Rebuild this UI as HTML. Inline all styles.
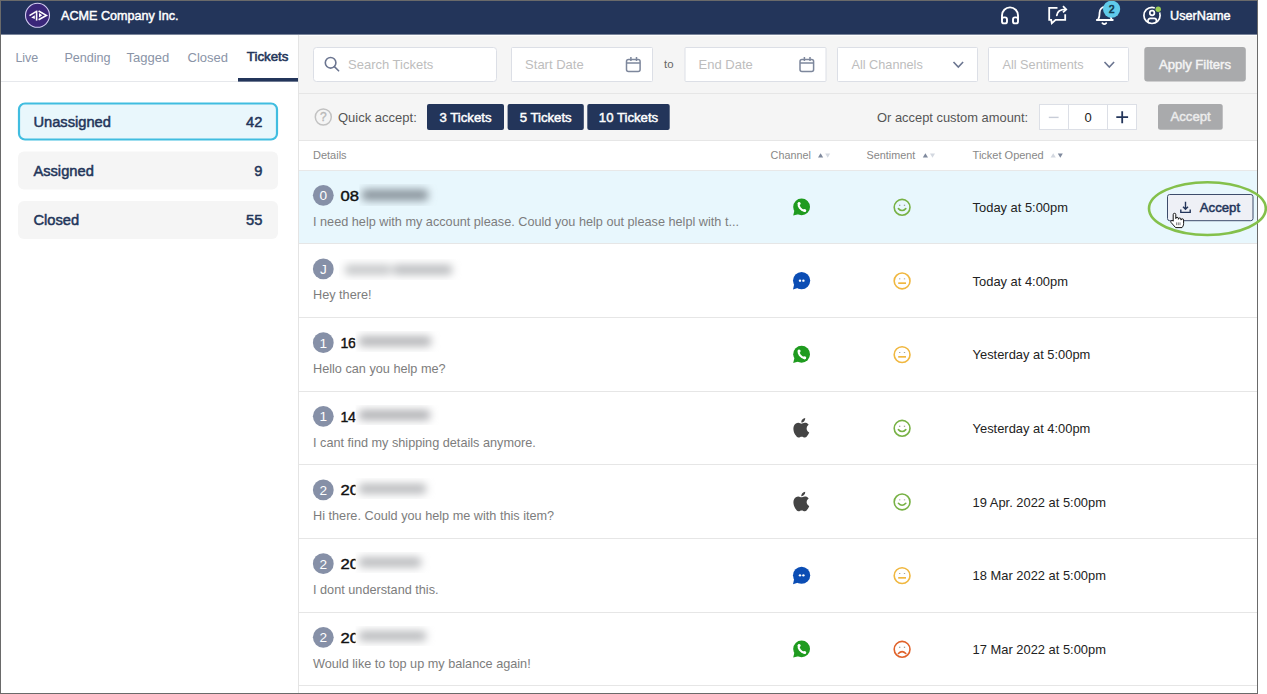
<!DOCTYPE html>
<html><head><meta charset="utf-8"><style>
html,body{margin:0;padding:0;background:#fff;width:1267px;height:694px;overflow:hidden}
svg{display:block;font-family:"Liberation Sans",sans-serif}
</style></head><body>
<svg width="1267" height="694" viewBox="0 0 1267 694">
<defs><filter id="bl" x="-50%" y="-50%" width="200%" height="200%"><feGaussianBlur stdDeviation="4.2"/></filter><clipPath id="cp0"><rect x="359.3" y="181.00" width="81.69999999999999" height="26"/></clipPath><clipPath id="cp1"><rect x="339" y="254.67" width="124" height="26"/></clipPath><clipPath id="cp2"><rect x="355.6" y="328.33" width="85.39999999999998" height="26"/></clipPath><clipPath id="cp3"><rect x="355.6" y="402.00" width="83.39999999999998" height="26"/></clipPath><clipPath id="cp4"><rect x="355.6" y="475.67" width="80.39999999999998" height="26"/></clipPath><clipPath id="cp5"><rect x="355.6" y="549.34" width="75.39999999999998" height="26"/></clipPath><clipPath id="cp6"><rect x="355.6" y="623.00" width="80.39999999999998" height="26"/></clipPath></defs>
<rect x="0" y="0" width="1267" height="694" fill="#fff"/>
<rect x="1" y="1" width="1256" height="33.6" fill="#23355a"/>
<rect x="299" y="36" width="958" height="57" fill="#f5f5f5"/>
<rect x="299" y="93" width="958" height="1" fill="#e6e6e6"/>
<rect x="299" y="94" width="958" height="46" fill="#f5f5f5"/>
<rect x="299" y="140" width="958" height="1" fill="#e6e6e6"/>
<rect x="299" y="170" width="958" height="1" fill="#e8e8e8"/>
<rect x="299" y="171" width="958" height="72" fill="#e8f7fd"/>
<rect x="299" y="243" width="958" height="1" fill="#e6e6e6"/>
<rect x="299" y="317" width="958" height="1" fill="#e6e6e6"/>
<rect x="299" y="391" width="958" height="1" fill="#e6e6e6"/>
<rect x="299" y="464" width="958" height="1" fill="#e6e6e6"/>
<rect x="299" y="538" width="958" height="1" fill="#e6e6e6"/>
<rect x="299" y="612" width="958" height="1" fill="#e6e6e6"/>
<rect x="299" y="685" width="958" height="1" fill="#e6e6e6"/>
<rect x="298" y="35" width="1" height="658" fill="#e4e4e4"/>
<rect x="1" y="81" width="297" height="1" fill="#e6e8ec"/>
<rect x="238" y="78" width="60" height="3.6" fill="#23355a"/>
<circle cx="37.5" cy="15.3" r="12" fill="#3a2679" stroke="#d4ccf2" stroke-width="1.1"/>
<g stroke="#fff" stroke-width="1.6" fill="none" stroke-linejoin="miter"><path d="M29.5 15.6 L36 11.6"/><path d="M36.6 10.6 V20.6"/><path d="M38.6 11 L46.4 15.4 L38.6 19.8"/></g>
<path d="M31.2 17.4 L34.8 15.2 L34.8 19 Z" fill="#fff"/><path d="M39 13 L42.2 15.3 L39 17.6 Z" fill="#fff"/>
<text x="61" y="20.1" font-size="12.6" font-weight="400" fill="#fff" stroke="#fff" stroke-width="0.45" text-anchor="start" >ACME Company Inc.</text>
<g stroke="#fff" stroke-width="1.9" fill="none" stroke-linecap="round"><path d="M1002 19 V15.4 A8 8 0 0 1 1018 15.4 V19"/><rect x="1002" y="17.4" width="5" height="6" rx="2"/><rect x="1013" y="17.4" width="5" height="6" rx="2"/></g>
<g stroke="#fff" stroke-width="1.8" fill="none" stroke-linejoin="miter"><path d="M1057.5 7.8 H1049.2 V19.8 H1051.2 L1051.8 23.2 L1055.6 19.8 H1065.2 V14.2"/><path d="M1056.8 15.4 C1057.2 11.6 1060 9.4 1065.6 9.4" stroke-linecap="round"/><path d="M1063 6.2 L1066.2 9.4 L1063 12.4"/></g>
<g stroke="#fff" stroke-width="1.8" fill="none" stroke-linecap="round"><path d="M1096.8 20 H1112.8"/><path d="M1098.2 19.6 C1099.6 17.5 1099.6 15.5 1099.6 12.6 A5.3 5.8 0 0 1 1110.2 12.6 C1110.2 15.5 1110.2 17.5 1111.6 19.6"/><path d="M1102.4 23.2 Q1104.3 25 1106.2 23.2"/></g>
<circle cx="1111.6" cy="9.1" r="8.6" fill="#60cbea"/>
<text x="1111.6" y="12.9" font-size="10.5" font-weight="400" fill="#123a4e" stroke="#123a4e" stroke-width="0.6" text-anchor="middle" >2</text>
<g stroke="#fff" stroke-width="1.7" fill="none"><circle cx="1152" cy="15.4" r="8.1"/><circle cx="1152.1" cy="13" r="2.3"/><path d="M1148 22.6 V20.6 A2.2 2.2 0 0 1 1150.2 18.4 H1154.2 A2.2 2.2 0 0 1 1156.4 20.6 V22.6"/></g>
<circle cx="1158.2" cy="9.2" r="3.6" fill="#23355a"/><circle cx="1158.2" cy="9.2" r="2.7" fill="#9acd55"/>
<text x="1170" y="20" font-size="12.7" font-weight="400" fill="#fff" stroke="#fff" stroke-width="0.45" text-anchor="start" >UserName</text>
<text x="15.4" y="62" font-size="12.5" font-weight="400" fill="#8a94a7" text-anchor="start" >Live</text>
<text x="64.4" y="62" font-size="12.6" font-weight="400" fill="#8a94a7" text-anchor="start" >Pending</text>
<text x="126.6" y="62" font-size="13" font-weight="400" fill="#8a94a7" text-anchor="start" >Tagged</text>
<text x="187.6" y="62" font-size="13" font-weight="400" fill="#8a94a7" text-anchor="start" >Closed</text>
<text x="246.8" y="61.2" font-size="13.3" font-weight="400" fill="#23355a" stroke="#23355a" stroke-width="0.55" text-anchor="start" >Tickets</text>
<rect x="19" y="103.5" width="258" height="36" rx="6" fill="#e9f7fc" stroke="#40bde0" stroke-width="2.2"/>
<rect x="18" y="151.5" width="260" height="38" rx="6" fill="#f5f5f5"/>
<rect x="18" y="201" width="260" height="38" rx="6" fill="#f5f5f5"/>
<text x="33.4" y="127" font-size="14.7" font-weight="400" fill="#23355a" stroke="#23355a" stroke-width="0.5" text-anchor="start" >Unassigned</text>
<text x="262.4" y="127" font-size="14.7" font-weight="400" fill="#23355a" stroke="#23355a" stroke-width="0.5" text-anchor="end" >42</text>
<text x="33.4" y="176" font-size="14.7" font-weight="400" fill="#23355a" stroke="#23355a" stroke-width="0.5" text-anchor="start" >Assigned</text>
<text x="262.4" y="176" font-size="14.7" font-weight="400" fill="#23355a" stroke="#23355a" stroke-width="0.5" text-anchor="end" >9</text>
<text x="33.4" y="225.4" font-size="14.7" font-weight="400" fill="#23355a" stroke="#23355a" stroke-width="0.5" text-anchor="start" >Closed</text>
<text x="262.4" y="225.4" font-size="14.7" font-weight="400" fill="#23355a" stroke="#23355a" stroke-width="0.5" text-anchor="end" >55</text>
<rect x="313.5" y="47.5" width="183" height="34" rx="3" fill="#fff" stroke="#dcdfe6"/>
<g stroke="#6b7590" stroke-width="1.6" fill="none"><circle cx="330.6" cy="62.8" r="5.3"/><path d="M334.4 66.6 L338.6 70.8" stroke-linecap="round"/></g>
<text x="348" y="69" font-size="13" font-weight="400" fill="#bdbdbd" text-anchor="start" >Search Tickets</text>
<rect x="511.5" y="47.5" width="141" height="34" rx="1" fill="#fff" stroke="#dcdfe6"/>
<text x="525.1" y="69" font-size="13" font-weight="400" fill="#bdbdbd" text-anchor="start" >Start Date</text>
<g stroke="#7d879c" stroke-width="1.5" fill="none"><rect x="626.5" y="59.4" width="13.6" height="12" rx="2"/><path d="M626.5 63 H640.1"/><path d="M630.9 57 V61 M636.5 57 V61"/></g>
<rect x="685" y="47.5" width="141" height="34" rx="1" fill="#fff" stroke="#dcdfe6"/>
<text x="698.6" y="69" font-size="13" font-weight="400" fill="#bdbdbd" text-anchor="start" >End Date</text>
<g stroke="#7d879c" stroke-width="1.5" fill="none"><rect x="800" y="59.4" width="13.6" height="12" rx="2"/><path d="M800 63 H813.6"/><path d="M804.4 57 V61 M810 57 V61"/></g>
<text x="664" y="68.4" font-size="11.4" font-weight="400" fill="#666" text-anchor="start" >to</text>
<rect x="837.5" y="47.5" width="140" height="34" rx="1" fill="#fff" stroke="#dcdfe6"/>
<text x="851.5" y="68.8" font-size="12.7" font-weight="400" fill="#bdbdbd" text-anchor="start" >All Channels</text>
<path d="M953.5 62 L958.3 67 L963.1 62" stroke="#6b7590" stroke-width="1.6" fill="none"/>
<rect x="988.5" y="47.5" width="140" height="34" rx="1" fill="#fff" stroke="#dcdfe6"/>
<text x="1002.5" y="68.8" font-size="12.7" font-weight="400" fill="#bdbdbd" text-anchor="start" >All Sentiments</text>
<path d="M1104.5 62 L1109.3 67 L1114.1 62" stroke="#6b7590" stroke-width="1.6" fill="none"/>
<rect x="1144.3" y="47" width="101.5" height="34.6" rx="3" fill="#a9aaac"/>
<text x="1195" y="68.7" font-size="13.1" font-weight="400" fill="#f4f4f4" stroke="#f4f4f4" stroke-width="0.45" text-anchor="middle" >Apply Filters</text>
<circle cx="323.3" cy="117" r="8" fill="none" stroke="#c2c2c2" stroke-width="1.5"/>
<text x="323.4" y="121.3" font-size="12" font-weight="400" fill="#b9b9b9" stroke="#b9b9b9" stroke-width="0.35" text-anchor="middle" >?</text>
<text x="338" y="121.7" font-size="13" font-weight="400" fill="#555" text-anchor="start" >Quick accept:</text>
<rect x="427" y="104" width="77" height="26" rx="2" fill="#23355a"/>
<text x="465.5" y="121.7" font-size="13.2" font-weight="400" fill="#fff" stroke="#fff" stroke-width="0.45" text-anchor="middle" >3 Tickets</text>
<rect x="507.6" y="104" width="76.2" height="26" rx="2" fill="#23355a"/>
<text x="545.7" y="121.7" font-size="13.2" font-weight="400" fill="#fff" stroke="#fff" stroke-width="0.45" text-anchor="middle" >5 Tickets</text>
<rect x="587.3" y="104" width="82.4" height="26" rx="2" fill="#23355a"/>
<text x="628.5" y="121.7" font-size="13.2" font-weight="400" fill="#fff" stroke="#fff" stroke-width="0.45" text-anchor="middle" >10 Tickets</text>
<text x="877" y="121.7" font-size="12.9" font-weight="400" fill="#555" text-anchor="start" >Or accept custom amount:</text>
<rect x="1039.5" y="104.5" width="97" height="25" fill="#fff" stroke="#dcdfe6"/>
<rect x="1068" y="104.5" width="1" height="25" fill="#dcdfe6"/><rect x="1107" y="104.5" width="1" height="25" fill="#dcdfe6"/>
<path d="M1048.8 117.4 H1058.6" stroke="#c8cdd8" stroke-width="1.4"/>
<text x="1088" y="121.5" font-size="13" font-weight="400" fill="#222" text-anchor="middle" >0</text>
<path d="M1116.3 117.2 H1128.1 M1122.2 111.2 V123.2" stroke="#23355a" stroke-width="1.8"/>
<rect x="1158" y="104" width="64.7" height="25.8" rx="2.5" fill="#a9aaac"/>
<text x="1190.6" y="121.4" font-size="13.2" font-weight="400" fill="#ececec" stroke="#ececec" stroke-width="0.45" text-anchor="middle" >Accept</text>
<text x="313" y="159" font-size="11" font-weight="400" fill="#888" text-anchor="start" >Details</text>
<text x="770.6" y="159" font-size="10.8" font-weight="400" fill="#888" text-anchor="start" >Channel</text>
<text x="866.6" y="159" font-size="10.8" font-weight="400" fill="#888" text-anchor="start" >Sentiment</text>
<text x="972.6" y="159" font-size="11" font-weight="400" fill="#888" text-anchor="start" >Ticket Opened</text>
<path d="M818 157.6 L820.6 153.2 L823.2 157.6 Z" fill="#7f899d"/><path d="M825.2 153.4 L830.2 153.4 L827.7 157.8 Z" fill="#d3d8e0"/>
<path d="M922.8 157.6 L925.4 153.2 L928.0 157.6 Z" fill="#7f899d"/><path d="M930.0 153.4 L935.0 153.4 L932.5 157.8 Z" fill="#d3d8e0"/>
<path d="M1050.6 157.6 L1053.1999999999998 153.2 L1055.8 157.6 Z" fill="#d3d8e0"/><path d="M1057.8 153.4 L1062.8 153.4 L1060.3 157.8 Z" fill="#7f899d"/>
<circle cx="323.3" cy="195.30" r="10.4" fill="#8690a7"/>
<text x="323.3" y="200.20" font-size="13.6" font-weight="400" fill="#fff" text-anchor="middle" >0</text>
<g transform="translate(340.6 200.50) scale(1.17 1)"><text x="0" y="0" font-size="14.2" font-weight="400" fill="#111" stroke="#111" stroke-width="0.4" text-anchor="start" >08</text></g>
<rect x="359.3" y="181.00" width="79.69999999999999" height="26" fill="#e8f7fd"/>
<g clip-path="url(#cp0)"><g filter="url(#bl)"><rect x="362" y="189.50" width="66" height="11" rx="3" fill="#87929a"/></g></g>
<text x="313" y="225.70" font-size="12.7" font-weight="400" fill="#7d7d7d" text-anchor="start" >I need help with my account please. Could you help out please helpl with t...</text>
<g transform="translate(792.80 198.40)"><circle cx="8.8" cy="8.5" r="8.4" fill="#1f9b1f"/><path d="M1.6 12.2 L0.4 17.2 L5.6 15.8 Z" fill="#1f9b1f"/><path d="M6 5.2 C5.2 7.8 7.6 11.6 11.8 12.4" stroke="#fff" stroke-width="2.1" fill="none" stroke-linecap="round"/><circle cx="6.3" cy="5.2" r="1.5" fill="#fff"/><circle cx="11.9" cy="12" r="1.5" fill="#fff"/></g>
<circle cx="902.1" cy="207.30" r="7.9" fill="none" stroke="#77b144" stroke-width="1.6"/>
<path d="M899.7 204.80 v0.9 M904.5 204.80 v0.9" stroke="#7d7d70" stroke-width="1.3" opacity="0.9"/>
<path d="M898.4 208.60 Q902.1 212.50 905.8000000000001 208.60" stroke="#77b144" stroke-width="1.6" fill="none" stroke-linecap="round"/>
<text x="972.6" y="211.90" font-size="12.9" font-weight="400" fill="#222" text-anchor="start" >Today at 5:00pm</text>
<circle cx="323.3" cy="268.97" r="10.4" fill="#8690a7"/>
<text x="323.3" y="273.87" font-size="13.6" font-weight="400" fill="#fff" text-anchor="middle" >J</text>
<rect x="339" y="254.67" width="122" height="26" fill="#fff"/>
<g clip-path="url(#cp1)"><g filter="url(#bl)"><rect x="345" y="264.67" width="46" height="10" rx="3" fill="#c4c6c8"/><rect x="393" y="264.67" width="59" height="10" rx="3" fill="#b9bbbe"/></g></g>
<text x="313" y="299.37" font-size="12.7" font-weight="400" fill="#7d7d7d" text-anchor="start" >Hey there!</text>
<g transform="translate(792.80 272.07)"><circle cx="8.8" cy="8.5" r="8.6" fill="#0b4db4"/><path d="M1.4 12 L0.2 17.4 L5.6 15.8 Z" fill="#0b4db4"/><circle cx="7.2" cy="8.6" r="1.2" fill="#fff"/><circle cx="10.6" cy="8.6" r="1.2" fill="#fff"/></g>
<circle cx="902.1" cy="280.97" r="7.9" fill="none" stroke="#f0b73f" stroke-width="1.6"/>
<path d="M899.7 278.47 v0.9 M904.5 278.47 v0.9" stroke="#7d7d70" stroke-width="1.3" opacity="0.9"/>
<path d="M898.2 283.17 H906.0" stroke="#f0b73f" stroke-width="1.7" fill="none"/>
<text x="972.6" y="285.57" font-size="12.9" font-weight="400" fill="#222" text-anchor="start" >Today at 4:00pm</text>
<circle cx="323.3" cy="342.63" r="10.4" fill="#8690a7"/>
<text x="323.3" y="347.53" font-size="13.6" font-weight="400" fill="#fff" text-anchor="middle" >1</text>
<g transform="translate(340.6 347.83) scale(1.0 1)"><text x="0" y="0" font-size="14.2" font-weight="400" fill="#111" stroke="#111" stroke-width="0.4" text-anchor="start" letter-spacing="-0.4">16</text></g>
<rect x="355.6" y="328.33" width="83.39999999999998" height="26" fill="#fff"/>
<g clip-path="url(#cp2)"><g filter="url(#bl)"><rect x="359" y="336.33" width="72" height="10" rx="3" fill="#b2b3b6"/></g></g>
<text x="313" y="373.03" font-size="12.7" font-weight="400" fill="#7d7d7d" text-anchor="start" >Hello can you help me?</text>
<g transform="translate(792.80 345.73)"><circle cx="8.8" cy="8.5" r="8.4" fill="#1f9b1f"/><path d="M1.6 12.2 L0.4 17.2 L5.6 15.8 Z" fill="#1f9b1f"/><path d="M6 5.2 C5.2 7.8 7.6 11.6 11.8 12.4" stroke="#fff" stroke-width="2.1" fill="none" stroke-linecap="round"/><circle cx="6.3" cy="5.2" r="1.5" fill="#fff"/><circle cx="11.9" cy="12" r="1.5" fill="#fff"/></g>
<circle cx="902.1" cy="354.63" r="7.9" fill="none" stroke="#f0b73f" stroke-width="1.6"/>
<path d="M899.7 352.13 v0.9 M904.5 352.13 v0.9" stroke="#7d7d70" stroke-width="1.3" opacity="0.9"/>
<path d="M898.2 356.83 H906.0" stroke="#f0b73f" stroke-width="1.7" fill="none"/>
<text x="972.6" y="359.23" font-size="12.9" font-weight="400" fill="#222" text-anchor="start" >Yesterday at 5:00pm</text>
<circle cx="323.3" cy="416.30" r="10.4" fill="#8690a7"/>
<text x="323.3" y="421.20" font-size="13.6" font-weight="400" fill="#fff" text-anchor="middle" >1</text>
<g transform="translate(340.6 421.50) scale(1.0 1)"><text x="0" y="0" font-size="14.2" font-weight="400" fill="#111" stroke="#111" stroke-width="0.4" text-anchor="start" letter-spacing="-0.4">14</text></g>
<rect x="355.6" y="402.00" width="81.39999999999998" height="26" fill="#fff"/>
<g clip-path="url(#cp3)"><g filter="url(#bl)"><rect x="359" y="410.00" width="71" height="10" rx="3" fill="#aeafb2"/></g></g>
<text x="313" y="446.70" font-size="12.7" font-weight="400" fill="#7d7d7d" text-anchor="start" >I cant find my shipping details anymore.</text>
<g transform="translate(791.6 418.10) scale(0.81)"><path d="M12.152 6.896c-.948 0-2.415-1.078-3.96-1.04-2.04.027-3.91 1.183-4.961 3.014-2.117 3.675-.546 9.103 1.519 12.09 1.013 1.454 2.208 3.09 3.792 3.039 1.52-.065 2.09-.987 3.935-.987 1.831 0 2.35.987 3.96.948 1.637-.026 2.676-1.48 3.676-2.948 1.156-1.688 1.636-3.325 1.662-3.415-.039-.013-3.182-1.221-3.22-4.857-.026-3.04 2.48-4.494 2.597-4.559-1.429-2.09-3.623-2.324-4.39-2.376-2-.156-3.675 1.09-4.61 1.09zM15.53 3.83c.843-1.012 1.4-2.427 1.245-3.83-1.207.052-2.662.805-3.532 1.818-.78.896-1.454 2.338-1.273 3.714 1.338.104 2.715-.688 3.559-1.701" fill="#444"/></g>
<circle cx="902.1" cy="428.30" r="7.9" fill="none" stroke="#77b144" stroke-width="1.6"/>
<path d="M899.7 425.80 v0.9 M904.5 425.80 v0.9" stroke="#7d7d70" stroke-width="1.3" opacity="0.9"/>
<path d="M898.4 429.60 Q902.1 433.50 905.8000000000001 429.60" stroke="#77b144" stroke-width="1.6" fill="none" stroke-linecap="round"/>
<text x="972.6" y="432.90" font-size="12.9" font-weight="400" fill="#222" text-anchor="start" >Yesterday at 4:00pm</text>
<circle cx="323.3" cy="489.97" r="10.4" fill="#8690a7"/>
<text x="323.3" y="494.87" font-size="13.6" font-weight="400" fill="#fff" text-anchor="middle" >2</text>
<g transform="translate(340.6 495.17) scale(1.17 1)"><text x="0" y="0" font-size="14.2" font-weight="400" fill="#111" stroke="#111" stroke-width="0.4" text-anchor="start" >20</text></g>
<rect x="355.6" y="475.67" width="78.39999999999998" height="26" fill="#fff"/>
<g clip-path="url(#cp4)"><g filter="url(#bl)"><rect x="359" y="483.67" width="67" height="10" rx="3" fill="#b8b9bc"/></g></g>
<text x="313" y="520.37" font-size="12.7" font-weight="400" fill="#7d7d7d" text-anchor="start" >Hi there. Could you help me with this item?</text>
<g transform="translate(791.6 491.77) scale(0.81)"><path d="M12.152 6.896c-.948 0-2.415-1.078-3.96-1.04-2.04.027-3.91 1.183-4.961 3.014-2.117 3.675-.546 9.103 1.519 12.09 1.013 1.454 2.208 3.09 3.792 3.039 1.52-.065 2.09-.987 3.935-.987 1.831 0 2.35.987 3.96.948 1.637-.026 2.676-1.48 3.676-2.948 1.156-1.688 1.636-3.325 1.662-3.415-.039-.013-3.182-1.221-3.22-4.857-.026-3.04 2.48-4.494 2.597-4.559-1.429-2.09-3.623-2.324-4.39-2.376-2-.156-3.675 1.09-4.61 1.09zM15.53 3.83c.843-1.012 1.4-2.427 1.245-3.83-1.207.052-2.662.805-3.532 1.818-.78.896-1.454 2.338-1.273 3.714 1.338.104 2.715-.688 3.559-1.701" fill="#444"/></g>
<circle cx="902.1" cy="501.97" r="7.9" fill="none" stroke="#77b144" stroke-width="1.6"/>
<path d="M899.7 499.47 v0.9 M904.5 499.47 v0.9" stroke="#7d7d70" stroke-width="1.3" opacity="0.9"/>
<path d="M898.4 503.27 Q902.1 507.17 905.8000000000001 503.27" stroke="#77b144" stroke-width="1.6" fill="none" stroke-linecap="round"/>
<text x="972.6" y="506.57" font-size="12.9" font-weight="400" fill="#222" text-anchor="start" >19 Apr. 2022 at 5:00pm</text>
<circle cx="323.3" cy="563.63" r="10.4" fill="#8690a7"/>
<text x="323.3" y="568.53" font-size="13.6" font-weight="400" fill="#fff" text-anchor="middle" >2</text>
<g transform="translate(340.6 568.84) scale(1.17 1)"><text x="0" y="0" font-size="14.2" font-weight="400" fill="#111" stroke="#111" stroke-width="0.4" text-anchor="start" >20</text></g>
<rect x="355.6" y="549.34" width="73.39999999999998" height="26" fill="#fff"/>
<g clip-path="url(#cp5)"><g filter="url(#bl)"><rect x="359" y="557.34" width="62" height="10" rx="3" fill="#b8b9bc"/></g></g>
<text x="313" y="594.04" font-size="12.7" font-weight="400" fill="#7d7d7d" text-anchor="start" >I dont understand this.</text>
<g transform="translate(792.80 566.74)"><circle cx="8.8" cy="8.5" r="8.6" fill="#0b4db4"/><path d="M1.4 12 L0.2 17.4 L5.6 15.8 Z" fill="#0b4db4"/><circle cx="7.2" cy="8.6" r="1.2" fill="#fff"/><circle cx="10.6" cy="8.6" r="1.2" fill="#fff"/></g>
<circle cx="902.1" cy="575.63" r="7.9" fill="none" stroke="#f0b73f" stroke-width="1.6"/>
<path d="M899.7 573.13 v0.9 M904.5 573.13 v0.9" stroke="#7d7d70" stroke-width="1.3" opacity="0.9"/>
<path d="M898.2 577.84 H906.0" stroke="#f0b73f" stroke-width="1.7" fill="none"/>
<text x="972.6" y="580.24" font-size="12.9" font-weight="400" fill="#222" text-anchor="start" >18 Mar 2022 at 5:00pm</text>
<circle cx="323.3" cy="637.30" r="10.4" fill="#8690a7"/>
<text x="323.3" y="642.20" font-size="13.6" font-weight="400" fill="#fff" text-anchor="middle" >2</text>
<g transform="translate(340.6 642.50) scale(1.17 1)"><text x="0" y="0" font-size="14.2" font-weight="400" fill="#111" stroke="#111" stroke-width="0.4" text-anchor="start" >20</text></g>
<rect x="355.6" y="623.00" width="78.39999999999998" height="26" fill="#fff"/>
<g clip-path="url(#cp6)"><g filter="url(#bl)"><rect x="359" y="631.00" width="67" height="10" rx="3" fill="#b8b9bc"/></g></g>
<text x="313" y="667.70" font-size="12.7" font-weight="400" fill="#7d7d7d" text-anchor="start" >Would like to top up my balance again!</text>
<g transform="translate(792.80 640.40)"><circle cx="8.8" cy="8.5" r="8.4" fill="#1f9b1f"/><path d="M1.6 12.2 L0.4 17.2 L5.6 15.8 Z" fill="#1f9b1f"/><path d="M6 5.2 C5.2 7.8 7.6 11.6 11.8 12.4" stroke="#fff" stroke-width="2.1" fill="none" stroke-linecap="round"/><circle cx="6.3" cy="5.2" r="1.5" fill="#fff"/><circle cx="11.9" cy="12" r="1.5" fill="#fff"/></g>
<circle cx="902.1" cy="649.30" r="7.9" fill="none" stroke="#e0622a" stroke-width="1.6"/>
<path d="M899.7 646.80 v0.9 M904.5 646.80 v0.9" stroke="#7d7d70" stroke-width="1.3" opacity="0.9"/>
<path d="M898.4 653.50 Q902.1 649.70 905.8000000000001 653.50" stroke="#e0622a" stroke-width="1.6" fill="none" stroke-linecap="round"/>
<text x="972.6" y="653.90" font-size="12.9" font-weight="400" fill="#222" text-anchor="start" >17 Mar 2022 at 5:00pm</text>
<rect x="1167.5" y="194.5" width="85.5" height="26.2" rx="2.2" fill="#eef0f6" stroke="#3d4c6b" stroke-width="1"/>
<g stroke="#23355a" stroke-width="1.4" fill="none"><path d="M1185.5 201.8 V209.2 M1183 206.8 L1185.5 209.2 L1188 206.8"/><path d="M1180.8 209.6 V212.4 H1190.2 V209.6"/></g>
<text x="1199.8" y="211.6" font-size="13.2" font-weight="400" fill="#23355a" stroke="#23355a" stroke-width="0.5" text-anchor="start" >Accept</text>
<rect x="0.5" y="0.5" width="1257" height="693" fill="none" stroke="#6a6a6a" stroke-width="1"/>
<ellipse cx="1207.4" cy="208.6" rx="58.4" ry="26.4" fill="none" stroke="#84c04b" stroke-width="2.6"/>
<path d="M1173.2 214.6 A1.3 1.3 0 0 1 1175.8 214.6 V218.6 A1.3 1.3 0 0 1 1178.4 218.6 V219.3 A1.3 1.3 0 0 1 1181 219.3 V220.1 A1.3 1.3 0 0 1 1183.6 220.1 V223.6 C1183.6 225.4 1182.8 226.6 1182 227.6 H1175.6 L1171 222.4 A1.25 1.25 0 0 1 1172.9 220.8 L1173.2 221.2 Z" fill="#fff" stroke="#111" stroke-width="1" stroke-linejoin="round"/><path d="M1176.6 222.4 V225.2 M1178.3 222.4 V225.2 M1180 222.4 V225.2" stroke="#444" stroke-width="0.7"/>
</svg></body></html>
